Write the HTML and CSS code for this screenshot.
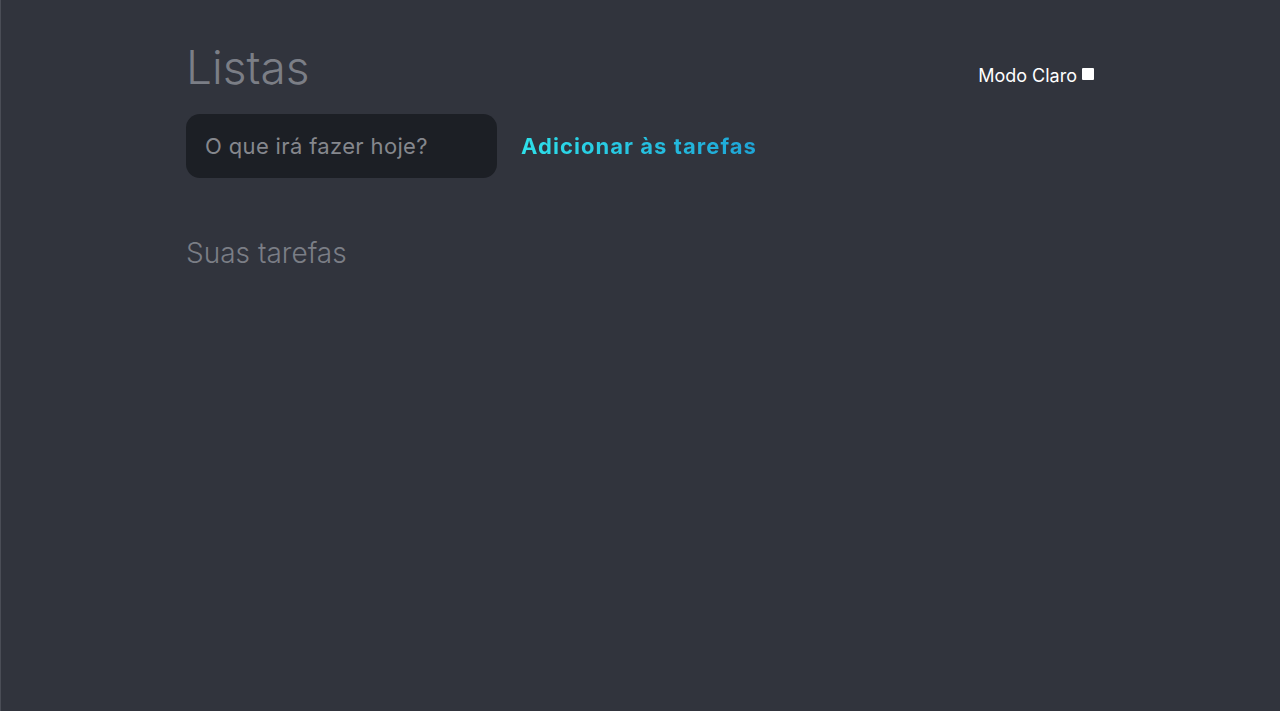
FILE: index.html
```html
<!DOCTYPE html>
<html lang="pt-BR">
<head>
<meta charset="utf-8">
<title>Listas</title>
<link rel="stylesheet" href="styles.css">
</head>
<body>
<main class="app">
  <header class="top">
    <h1 class="title">Listas</h1>
    <label class="mode">Modo Claro <span class="box"></span></label>
  </header>
  <form class="add">
    <input class="task-input" type="text" placeholder="O que irá fazer hoje?">
    <button class="add-btn" type="button">Adicionar às tarefas</button>
  </form>
  <h2 class="sub">Suas tarefas</h2>
</main>
</body>
</html>
```
FILE: styles.css
```css
html, body {
  margin: 0;
  height: 100%;
}
body {
  background: #31343d;
  box-shadow: inset 1px 0 0 #4a4d56;
  font-family: Inter, "Open Sans", sans-serif;
}
.app {
  width: 908px;
  margin: 0 auto;
  padding-top: 40px;
}
.top {
  display: flex;
  justify-content: space-between;
  align-items: flex-start;
}
.title {
  margin: 0;
  font-size: 46px;
  font-weight: 300;
  color: #7b7e86;
  line-height: 54px;
}
.mode {
  margin-top: 25px;
  font-size: 18px;
  color: #ffffff;
  display: flex;
  align-items: center;
  gap: 5px;
}
.box {
  width: 12px;
  height: 12px;
  background: #fff;
  border-radius: 1px;
  margin-top: -4px;
}
.add {
  display: flex;
  align-items: center;
  gap: 24px;
  margin-top: 20px;
}
.task-input {
  width: 311px;
  height: 64px;
  box-sizing: border-box;
  border: none;
  border-radius: 14px;
  background: #1c1f25;
  padding: 0 19px;
  font-family: inherit;
  font-size: 22px;
  letter-spacing: 0.35px;
  color: #ccc;
  outline: none;
}
.task-input::placeholder {
  color: #85878d;
}
.add-btn {
  border: none;
  background: linear-gradient(90deg, #2ee0ea 0%, #1ea4d6 100%);
  -webkit-background-clip: text;
  background-clip: text;
  color: transparent;
  font-family: inherit;
  font-size: 22px;
  font-weight: 700;
  letter-spacing: 1.05px;
  padding: 0;
  cursor: pointer;
}
.sub {
  margin: 58px 0 0;
  font-size: 28px;
  font-weight: 300;
  color: #7b7e86;
}
```
